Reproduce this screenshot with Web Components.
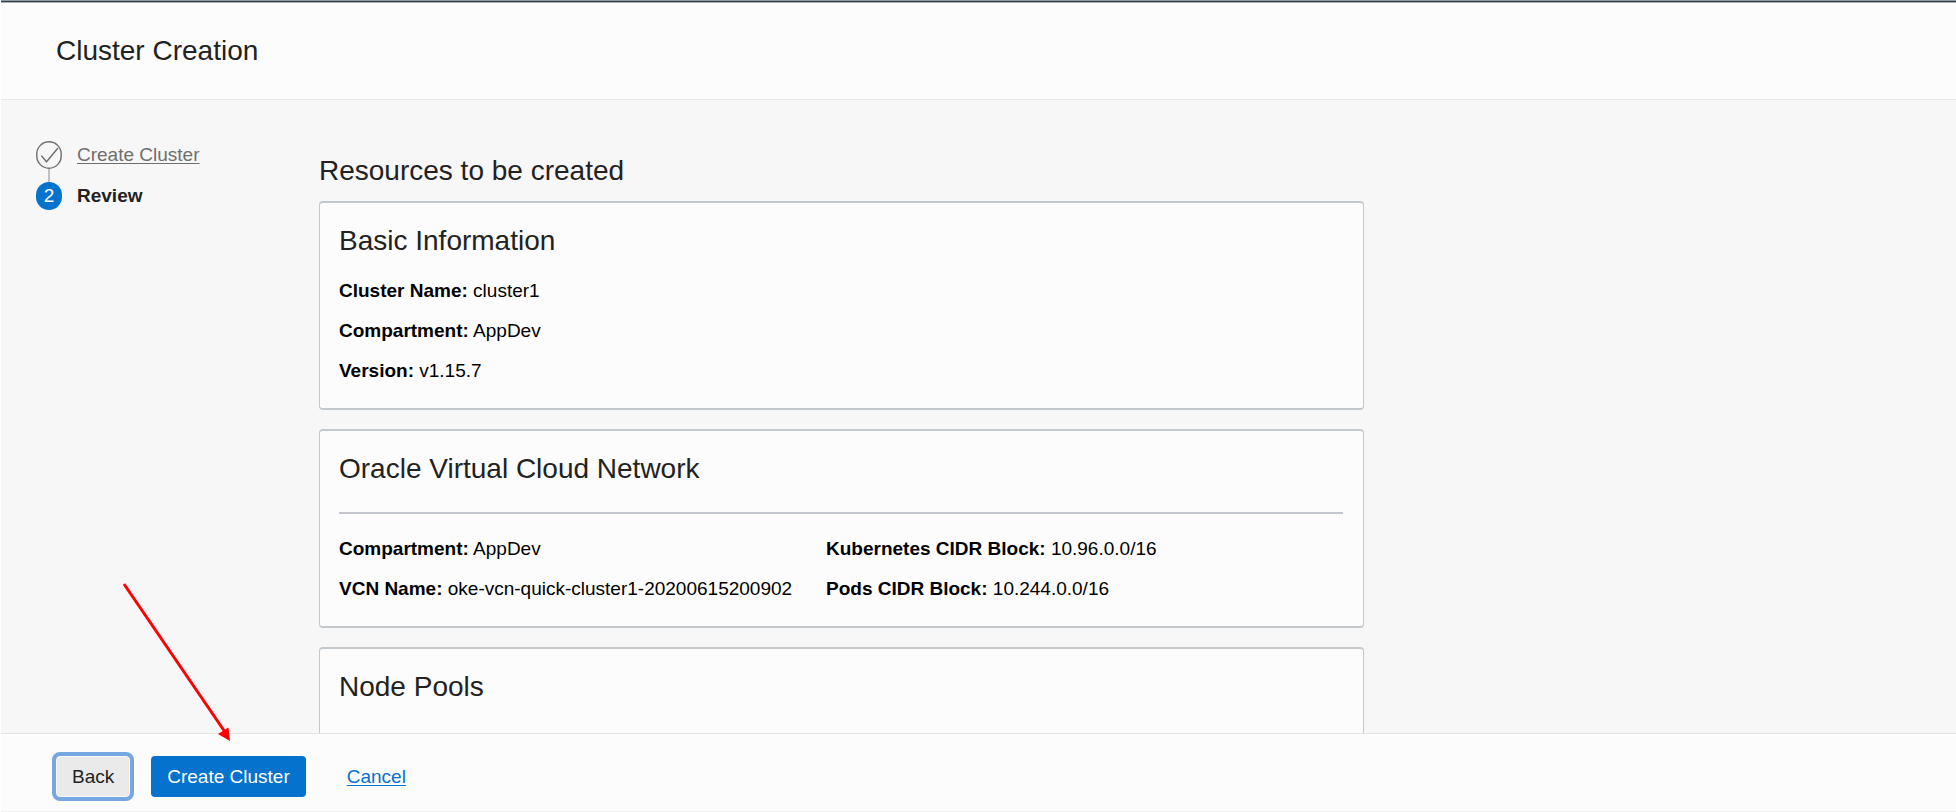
<!DOCTYPE html>
<html lang="en">
<head>
<meta charset="utf-8">
<title>Cluster Creation</title>
<style>
  html, body { margin: 0; height: 100%; }
  body {
    font-family: "Liberation Sans", Arial, sans-serif;
    font-size: 19px;
    line-height: 24px;
    color: #222;
    background: #f7f7f7;
  }
</style>
</head>
<body>
<cluster-wizard>
  <wizard-steps slot="steps">
    <wizard-step state="done" label="Create Cluster"></wizard-step>
    <wizard-step state="current" number="2" label="Review"></wizard-step>
  </wizard-steps>
  <review-card heading="Basic Information">
    <review-field label="Cluster Name:">cluster1</review-field>
    <review-field label="Compartment:">AppDev</review-field>
    <review-field label="Version:">v1.15.7</review-field>
  </review-card>
  <review-card heading="Oracle Virtual Cloud Network" split>
    <review-field label="Compartment:">AppDev</review-field>
    <review-field label="Kubernetes CIDR Block:">10.96.0.0/16</review-field>
    <review-field label="VCN Name:">oke-vcn-quick-cluster1-20200615200902</review-field>
    <review-field label="Pods CIDR Block:">10.244.0.0/16</review-field>
  </review-card>
  <review-card heading="Node Pools"></review-card>
  <wizard-actions slot="actions"></wizard-actions>
  <pointer-arrow slot="overlay"></pointer-arrow>
</cluster-wizard>

<script>
  const define = (name, markup, setup) => {
    const template = document.createElement('template');
    template.innerHTML = markup;
    customElements.define(name, class extends HTMLElement {
      constructor() {
        super();
        this.attachShadow({ mode: 'open' }).append(template.content.cloneNode(true));
      }
      connectedCallback() { if (setup) setup(this, this.shadowRoot); }
    });
  };

  define('cluster-wizard', `
    <style>
      :host {
        display: flex; flex-direction: column; position: relative;
        height: 100vh; box-sizing: border-box; overflow: hidden;
        border-left: 1px solid #fff; border-bottom: 1px solid #efefef;
      }
      header {
        flex: none; padding: 34px 55px 32px; background: #fcfcfc;
        box-shadow: inset 0 1px #8e9a9b, inset 0 2px #343d50, inset 0 3px #a9afb6, inset 0 -1px #e5e7e8;
      }
      h1, h2 { margin: 0; font-size: 28px; line-height: 34px; font-weight: 400; }
      .body { flex: 1; min-height: 0; display: grid; grid-template-columns: 318px minmax(0, 1fr); overflow: hidden; }
      main { padding: 54px 20px 0 0; display: flex; flex-direction: column; gap: 19px; max-width: 1045px; }
      h2 { margin-bottom: -6px; }
    </style>
    <header><h1>Cluster Creation</h1></header>
    <div class="body">
      <slot name="steps"></slot>
      <main><h2>Resources to be created</h2><slot></slot></main>
    </div>
    <slot name="actions"></slot>
    <slot name="overlay"></slot>
  `);

  define('wizard-steps', `
    <style>
      :host { display: block; padding: 41px 0 0 35px; }
      nav { display: flex; flex-direction: column; }
    </style>
    <nav aria-label="Steps"><slot></slot></nav>
  `);

  define('wizard-step', `
    <style>
      :host { display: flex; align-items: flex-start; gap: 15px; }
      svg { display: block; flex: none; }
      a, strong { line-height: 28px; }
      a { color: #6f6f6f; text-decoration-thickness: 1px; text-underline-offset: 2px; }
      .badge {
        display: grid; place-items: center; width: 26px; height: 28px; border-radius: 13px;
        background: #0572ce; color: #fff; font-size: 19px;
      }
      :host([state="done"]) .current, :host([state="current"]) .done { display: none; }
    </style>
    <svg class="done" width="26" height="41" viewBox="0 0 26 41" fill="none" stroke="#6f6f6f" aria-hidden="true">
      <rect x=".8" y=".8" width="24.4" height="26.4" rx="12.2" stroke-width="1.4"/>
      <path d="M5.3 14.6l5.2 6.2L22 7" stroke-width="1.4"/>
      <path d="M13 28v13" stroke="#8a8a8a"/>
    </svg>
    <a class="done" href="#create"></a>
    <span class="badge current"></span>
    <strong class="current"></strong>
  `, (host, root) => {
    root.querySelector(host.getAttribute('state') === 'done' ? 'a' : 'strong').textContent = host.getAttribute('label');
    root.querySelector('.badge').textContent = host.getAttribute('number') || '';
  });

  define('review-card', `
    <style>
      :host {
        display: block; padding: 21px 20px 17px 19px; background: #fcfcfc;
        border: solid #c3c8cd; border-width: 2px 1px; border-radius: 4px;
      }
      h3 { margin: 0 0 13px; font-size: 28px; line-height: 34px; font-weight: 400; }
      .fields { display: grid; grid-auto-rows: 40px; align-items: center; color: #000; }
      :host([split]) h3 { margin-bottom: 15px; padding-bottom: 26px; border-bottom: 2px solid #c3c6cd; }
      :host([split]) .fields { grid-template-columns: 487px minmax(0, 1fr); }
    </style>
    <h3></h3>
    <div class="fields"><slot></slot></div>
  `, (host, root) => { root.querySelector('h3').textContent = host.getAttribute('heading'); });

  define('review-field', `
    <style>:host { display: block; }</style>
    <b></b> <slot></slot>
  `, (host, root) => { root.querySelector('b').textContent = host.getAttribute('label'); });

  define('wizard-actions', `
    <style>
      :host {
        display: flex; flex: none; align-items: center; box-sizing: border-box;
        padding: 22px 55px 14px; background: #fcfcfc; border-top: 1px solid #e3e3e3;
      }
      button {
        font: inherit; height: 41px; padding: 0 16px; margin: 0;
        border: 0; border-radius: 4px; color: #fff; background: #0572ce;
      }
      .back {
        color: #222; background: #eaeaea; border: 1px solid #f8f8f8; padding: 0 15px;
        box-shadow: 0 0 0 4px #77a7e2;
      }
      .create { margin-left: 21px; }
      a { margin-left: 41px; color: #0572ce; text-decoration-thickness: 1px; text-underline-offset: 2px; }
    </style>
    <button class="back" type="button">Back</button>
    <button class="create" type="button">Create Cluster</button>
    <a href="#cancel">Cancel</a>
  `);

  define('pointer-arrow', `
    <style>
      :host { position: absolute; left: 118px; bottom: 65px; pointer-events: none; }
      svg { display: block; }
    </style>
    <svg width="120" height="166" viewBox="0 0 120 166" aria-hidden="true">
      <path d="M5 4l101 148" stroke="#f00" stroke-width="3"/>
      <path d="M111 161l-12-7 10.500-6.500z" fill="#f00"/>
    </svg>
  `);
</script>
</body>
</html>
